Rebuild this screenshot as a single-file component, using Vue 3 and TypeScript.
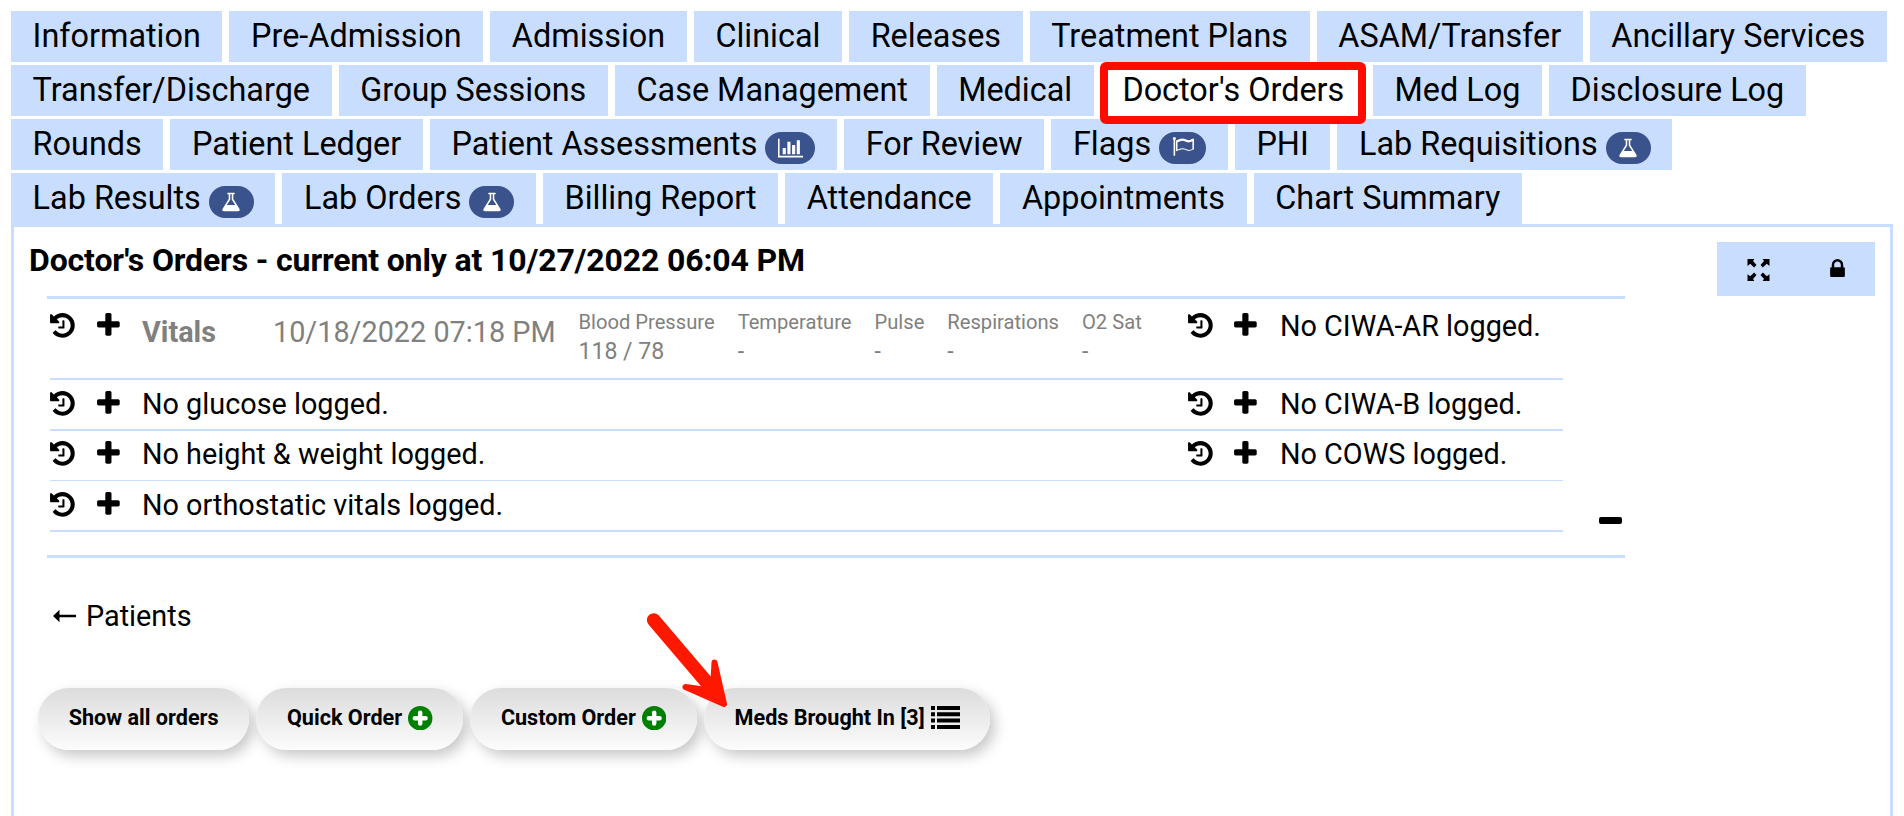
<script setup lang="ts">
interface Tab {
  label: string
  icon?: 'chart' | 'flag' | 'flask'
  active?: boolean
}
interface LogRow {
  left: string
  right?: string
}
interface Action {
  label: string
  icon?: 'add' | 'list'
}

const tabRows: Tab[][] = [
  [
    { label: 'Information' }, { label: 'Pre-Admission' }, { label: 'Admission' }, { label: 'Clinical' },
    { label: 'Releases' }, { label: 'Treatment Plans' }, { label: 'ASAM/Transfer' }, { label: 'Ancillary Services' },
  ],
  [
    { label: 'Transfer/Discharge' }, { label: 'Group Sessions' }, { label: 'Case Management' }, { label: 'Medical' },
    { label: "Doctor's Orders", active: true }, { label: 'Med Log' }, { label: 'Disclosure Log' },
  ],
  [
    { label: 'Rounds' }, { label: 'Patient Ledger' }, { label: 'Patient Assessments', icon: 'chart' },
    { label: 'For Review' }, { label: 'Flags', icon: 'flag' }, { label: 'PHI' },
    { label: 'Lab Requisitions', icon: 'flask' },
  ],
  [
    { label: 'Lab Results', icon: 'flask' }, { label: 'Lab Orders', icon: 'flask' }, { label: 'Billing Report' },
    { label: 'Attendance' }, { label: 'Appointments' }, { label: 'Chart Summary' },
  ],
]

const badgeIcons = {
  chart: {
    box: '0 0 2048 1792',
    path: 'M640 896v512h-256v-512h256zm384-512v1024h-256v-1024h256zm1024 1152v128h-2048v-1536h128v1408h1920zm-640-896v768h-256v-768h256zm384-384v1152h-256v-1152h256z',
  },
  flag: {
    box: '0 0 1792 1792',
    path: 'M1664 971v-616q-169 91-306 91-82 0-145-32-100-49-184-76.5t-178-27.5q-173 0-403 127v599q245-113 433-113 55 0 103.5 7.5t98 26 77 31 82.5 39.5l28 14q44 22 101 22 120 0 293-92zm-1344-843q0 35-17.5 64t-46.5 46v1266q0 14-9 23t-23 9h-64q-14 0-23-9t-9-23v-1266q-29-17-46.5-46t-17.5-64q0-53 37.5-90.5t90.5-37.5 90.5 37.5 37.5 90.5zm1472 64v763q0 39-35 57-10 5-17 9-218 116-369 116-88 0-158-35l-28-14q-64-33-99-48t-91-29-114-14q-102 0-235.5 44t-228.5 102q-15 9-33 9-16 0-32-8-32-19-32-56v-742q0-35 31-55 35-21 78.5-42.5t114-52 152.5-49.5 155-19q112 0 209 31t209 86q38 19 89 19 122 0 310-112 22-12 31-17 31-16 62 2 31 20 31 55z',
  },
  flask: {
    box: '64 0 1664 1792',
    path: 'M1591 1448q56 89 21.5 152.5t-140.5 63.5h-1152q-106 0-140.5-63.5t21.5-152.5l503-793v-399h-64q-26 0-45-19t-19-45 19-45 45-19h512q26 0 45 19t19 45-19 45-45 19h-64v399zm-779-725l-272 429h712l-272-429-20-31v-436h-128v436z',
  },
}

const historyPath =
  'M1664 896q0 156-61 298t-164 245-245 164-298 61q-172 0-327-72.5t-264-204.5q-7-10-6.5-22.5t8.5-20.5l137-138q10-9 25-9 16 2 23 12 73 95 179 147t225 52q104 0 198.5-40.5t163.5-109.5 109.5-163.5 40.5-198.5-40.5-198.5-109.5-163.5-163.5-109.5-198.5-40.5q-98 0-188 35.5t-160 101.5l137 138q31 30 14 69-17 40-59 40h-448q-26 0-45-19t-19-45v-448q0-42 40-59 39-17 69 14l130 129q107-101 244.5-156.5t284.5-55.5q156 0 298 61t245 164 164 245 61 298zm-640-288v448q0 14-9 23t-23 9h-320q-14 0-23-9t-9-23v-64q0-14 9-23t23-9h224v-352q0-14 9-23t23-9h64q14 0 23 9t9 23z'
const plusPath =
  'M1600 736v192q0 40-28 68t-68 28h-416v416q0 40-28 68t-68 28h-192q-40 0-68-28t-28-68v-416h-416q-40 0-68-28t-28-68v-192q0-40 28-68t68-28h416v-416q0-40 28-68t68-28h192q40 0 68 28t28 68v416h416q40 0 68 28t28 68z'

const readings = [
  { label: 'Blood Pressure', value: '118 / 78' },
  { label: 'Temperature', value: '-' },
  { label: 'Pulse', value: '-' },
  { label: 'Respirations', value: '-' },
  { label: 'O2 Sat', value: '-' },
]

const logRows: LogRow[] = [
  { left: 'No glucose logged.', right: 'No CIWA-B logged.' },
  { left: 'No height & weight logged.', right: 'No COWS logged.' },
  { left: 'No orthostatic vitals logged.' },
]

const actions: Action[] = [
  { label: 'Show all orders' },
  { label: 'Quick Order', icon: 'add' },
  { label: 'Custom Order', icon: 'add' },
  { label: 'Meds Brought In [3]', icon: 'list' },
]
</script>

<template>
  <div class="page">
    <nav class="tabs">
      <div v-for="(row, r) in tabRows" :key="r" class="tab-row">
        <a v-for="tab in row" :key="tab.label" class="tab" :class="{ active: tab.active }">
          <span>{{ tab.label }}</span>
          <span v-if="tab.icon" class="badge">
            <svg :class="tab.icon" :viewBox="badgeIcons[tab.icon].box"><path :d="badgeIcons[tab.icon].path" /></svg>
          </span>
        </a>
      </div>
    </nav>

    <main class="panel">
      <div class="main-col">
        <h1>Doctor's Orders - current only at 10/27/2022 06:04 PM</h1>

        <section class="logs">
          <div class="log-table">
            <div class="log-row vitals-row">
              <svg class="ico" viewBox="0 0 1792 1792"><path :d="historyPath" /></svg>
              <svg class="ico" viewBox="0 0 1792 1792"><path :d="plusPath" /></svg>
              <div class="vitals">
                <strong>Vitals</strong>
                <span class="when">10/18/2022 07:18 PM</span>
                <dl>
                  <div v-for="item in readings" :key="item.label">
                    <dt>{{ item.label }}</dt>
                    <dd>{{ item.value }}</dd>
                  </div>
                </dl>
              </div>
              <svg class="ico" viewBox="0 0 1792 1792"><path :d="historyPath" /></svg>
              <svg class="ico" viewBox="0 0 1792 1792"><path :d="plusPath" /></svg>
              <span class="msg">No CIWA-AR logged.</span>
            </div>
            <div v-for="row in logRows" :key="row.left" class="log-row">
              <svg class="ico" viewBox="0 0 1792 1792"><path :d="historyPath" /></svg>
              <svg class="ico" viewBox="0 0 1792 1792"><path :d="plusPath" /></svg>
              <span class="msg">{{ row.left }}</span>
              <template v-if="row.right">
                <svg class="ico" viewBox="0 0 1792 1792"><path :d="historyPath" /></svg>
                <svg class="ico" viewBox="0 0 1792 1792"><path :d="plusPath" /></svg>
                <span class="msg">{{ row.right }}</span>
              </template>
            </div>
          </div>
          <span class="collapse"></span>
        </section>

        <a class="back">
          <svg viewBox="0 0 23 14"><path d="M0 7 6.5 .8V5.7H23V8.3H6.5V13.2z" /></svg>
          <span>Patients</span>
        </a>

        <div class="actions">
          <button v-for="action in actions" :key="action.label" type="button">
            <span>{{ action.label }}</span>
            <svg v-if="action.icon === 'add'" class="add" viewBox="0 0 24 24">
              <circle cx="12" cy="12" r="12" />
              <path d="M12 6.7v10.6M6.7 12h10.6" />
            </svg>
            <svg v-if="action.icon === 'list'" class="list" viewBox="0 0 29 23">
              <path d="M0 0h4v4H0zM6 0h23v4H6zM0 6.3h4v4H0zM6 6.3h23v4H6zM0 12.6h4v4H0zM6 12.6h23v4H6zM0 19h4v4H0zM6 19h23v4H6z" />
            </svg>
          </button>
        </div>
      </div>

      <aside class="tools">
        <svg class="expand" viewBox="0 0 24 24">
          <path d="M0 0H7.5L6 2.2 9.8 6.5 7.2 9.2 3 5.2 0 7.5z" />
          <path d="M24 0H16.5L18 2.2 14.2 6.5 16.8 9.2 21 5.2 24 7.5z" />
          <path d="M0 24H7.5L6 21.8 9.8 17.5 7.2 14.8 3 18.8 0 16.5z" />
          <path d="M24 24H16.5L18 21.8 14.2 17.5 16.8 14.8 21 18.8 24 16.5z" />
        </svg>
        <svg class="lock" viewBox="320 256 1152 1408">
          <path d="M640 768h512v-192q0-106-75-181t-181-75-181 75-75 181v192zm832 96v576q0 40-28 68t-68 28h-960q-40 0-68-28t-28-68v-576q0-40 28-68t68-28h32v-192q0-184 132-316t316-132 316 132 132 316v192h32q40 0 68 28t28 68z" transform="translate(0 128)" />
        </svg>
      </aside>
    </main>

    <svg class="pointer" viewBox="640 606 96 108">
      <path class="shaft" d="M653.7 620 709 685" />
      <path class="head" d="M714.5 662.5 724 704 685.5 687 703 689.5 713.5 680z" />
    </svg>
  </div>
</template>

<style>
body {
  margin: 0;
  background: #fff;
}
</style>

<style scoped>
.page {
  position: relative;
  box-sizing: border-box;
  width: 1904px;
  height: 816px;
  padding: 11px 11px 0;
  overflow: hidden;
  display: flex;
  flex-direction: column;
  background: #fff;
  color: #000;
  font-family: Roboto, "Liberation Sans", sans-serif;
}
.tabs {
  display: flex;
  flex-direction: column;
  gap: 3px;
}
.tab-row {
  display: flex;
  gap: 7px;
  height: 51px;
}
.tab {
  position: relative;
  display: flex;
  align-items: flex-start;
  gap: 8px;
  padding: 0 21.6px;
  background: #c9deff;
  font-size: 32.4px;
  line-height: 50px;
  white-space: nowrap;
}
.tab.active {
  background: #fff;
}
.tab.active::after {
  content: "";
  position: absolute;
  inset: -3px 0 -8px -1px;
  border: 8px solid #ff0c00;
  border-radius: 6px;
  z-index: 1;
}
.badge {
  display: flex;
  align-items: center;
  height: 32px;
  margin-top: 13px;
  padding: 0 12.5px;
  border-radius: 16px;
  background: #3b538c;
}
.badge svg {
  display: block;
  height: 22px;
  fill: #fff;
}
.badge .chart {
  width: 25px;
}
.badge .flag {
  width: 22px;
}
.badge .flask {
  width: 20px;
}
.panel {
  flex: 1;
  display: flex;
  justify-content: space-between;
  box-sizing: border-box;
  width: 1882px;
  border: 3px solid #c9deff;
  border-bottom: 0;
}
.main-col {
  width: 1640px;
}
h1 {
  margin: 14px 0 0 15px;
  font-size: 32px;
  line-height: 38px;
  font-weight: 700;
  letter-spacing: -0.14px;
  white-space: nowrap;
}
.logs {
  display: flex;
  box-sizing: border-box;
  width: 1578px;
  height: 262px;
  margin: 17px 0 0 33px;
  padding-left: 3px;
  border: solid #c9deff;
  border-width: 3px 0;
}
.log-table {
  width: 1513px;
}
.log-row {
  display: grid;
  grid-template-columns: 45.5px 46.5px 1046px 45px 47px 1fr;
  align-items: start;
  box-sizing: border-box;
  height: 51px;
  padding-top: 10px;
  border-bottom: 2px solid #c9deff;
}
.log-row:nth-child(3) {
  height: 50px;
  padding-top: 9px;
  border-bottom-width: 1px;
}
.log-row.vitals-row {
  height: 81px;
  padding-top: 13px;
}
.ico {
  width: 28.8px;
  height: 28.8px;
  margin: -1px 0 0 -2px;
}
.msg {
  margin-top: -2px;
  font-size: 28.8px;
  line-height: 32px;
  white-space: nowrap;
}
.vitals {
  display: flex;
  margin-top: -1px;
  color: #808080;
  font-size: 28.8px;
  line-height: 32px;
  white-space: nowrap;
}
.vitals strong {
  width: 131px;
  margin-top: 5px;
}
.when {
  width: 305.5px;
  margin-top: 5px;
}
dl {
  display: flex;
  gap: 23px;
  margin: 0;
}
dt {
  font-size: 20.16px;
  line-height: 24px;
  margin-top: -1px;
}
dd {
  margin: 4px 0 0;
  font-size: 23.04px;
  line-height: 27px;
}
.collapse {
  width: 23px;
  height: 7px;
  margin: 218px 0 0 36px;
  border-radius: 2px;
  background: #000;
}
.back {
  display: flex;
  align-items: center;
  gap: 10px;
  margin: 41px 0 0 39px;
  font-size: 28.8px;
  line-height: 34px;
}
.back svg {
  width: 23px;
  height: 14px;
}
.actions {
  display: flex;
  gap: 7px;
  margin: 55px 0 0 24px;
}
button {
  display: flex;
  align-items: center;
  gap: 6px;
  box-sizing: border-box;
  height: 62px;
  padding: 0 30.7px;
  border: 0;
  border-radius: 31px;
  background: linear-gradient(#dcdcdc, #fcfcfc);
  box-shadow: 5px 6px 14px rgba(0, 0, 0, 0.22);
  color: #000;
  font-family: inherit;
  font-size: 21.6px;
  font-weight: 700;
  line-height: 26px;
  white-space: nowrap;
}
button span {
  margin-top: -2px;
}
.add {
  width: 24.4px;
  height: 24.4px;
  margin-top: -2px;
}
.add circle {
  fill: #008000;
}
.add path {
  fill: none;
  stroke: #fff;
  stroke-width: 4.4;
  stroke-linecap: round;
}
.list {
  width: 29px;
  height: 23px;
  margin-top: -4px;
}
.tools {
  display: flex;
  box-sizing: border-box;
  width: 158px;
  height: 54px;
  margin: 15px 15px 0 0;
  padding: 17px 30px 0;
  justify-content: space-between;
  background: #c9deff;
}
.expand {
  width: 23px;
  height: 22px;
}
.lock {
  width: 15px;
  height: 18px;
}
.pointer {
  position: absolute;
  left: 640px;
  top: 606px;
  width: 96px;
  height: 108px;
}
.shaft {
  fill: none;
  stroke: #ff1800;
  stroke-width: 13.6;
  stroke-linecap: round;
}
.head {
  fill: #ff1800;
  stroke: #ff1800;
  stroke-width: 6;
  stroke-linejoin: round;
}
</style>
